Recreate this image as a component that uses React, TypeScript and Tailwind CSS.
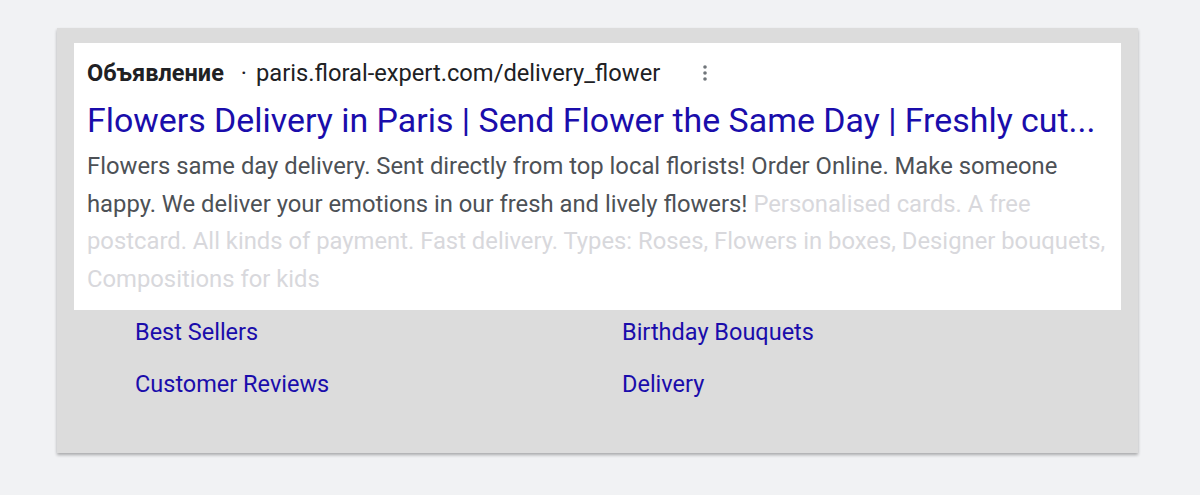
import React from "react";

export default function App() {
  return (
    <div className="w-[1200px] h-[495px] bg-[#f1f2f4] pt-[28px] pl-[57px]" style={{ fontFamily: "Roboto, 'Noto Sans', sans-serif" }}>
      <div className="w-[1081px] h-[425px] bg-[#dcdcdc] pt-[15px] pl-[17px] shadow-[0_2px_3px_rgba(0,0,0,0.3)]">
        <div className="w-[1047px] h-[267px] bg-white pl-[13px] pt-[16px]">
          <div className="flex items-center h-[28px] text-[23.7px] leading-[28px]">
            <span className="font-bold text-[#202124] text-[23.5px]">Объявление</span>
            <span className="ml-[17px] text-[#202124]">·</span>
            <span className="ml-[9px] text-[#202124]">paris.floral-expert.com/delivery_flower</span>
            <svg className="ml-[42px]" width="6" height="18" viewBox="0 0 6 18">
              <circle cx="3" cy="3" r="1.8" fill="#70757a" />
              <circle cx="3" cy="9" r="1.8" fill="#70757a" />
              <circle cx="3" cy="15" r="1.8" fill="#70757a" />
            </svg>
          </div>
          <div className="mt-[14px] text-[33.9px] leading-[40px] text-[#1a0dab] whitespace-nowrap">
            Flowers Delivery in Paris | Send Flower the Same Day | Freshly cut...
          </div>
          <div className="mt-[7px] w-[1030px] text-[23.8px] leading-[37.5px] text-[#4d5156]">
            Flowers same day delivery. Sent directly from top local florists! Order Online. Make someone happy. We deliver your emotions in our fresh and lively flowers!{" "}
            <span className="text-[#d8d8dc]">
              Personalised cards. A free postcard. All kinds of payment. Fast delivery. Types: Roses, Flowers in boxes, Designer bouquets, Compositions for kids
            </span>
          </div>
        </div>
        <div className="grid grid-cols-[487px_1fr] pl-[61px] pt-[7px] text-[23.5px] leading-[30px] text-[#1a0dab] gap-y-[22px]">
          <div>Best Sellers</div>
          <div>Birthday Bouquets</div>
          <div>Customer Reviews</div>
          <div>Delivery</div>
        </div>
      </div>
    </div>
  );
}
